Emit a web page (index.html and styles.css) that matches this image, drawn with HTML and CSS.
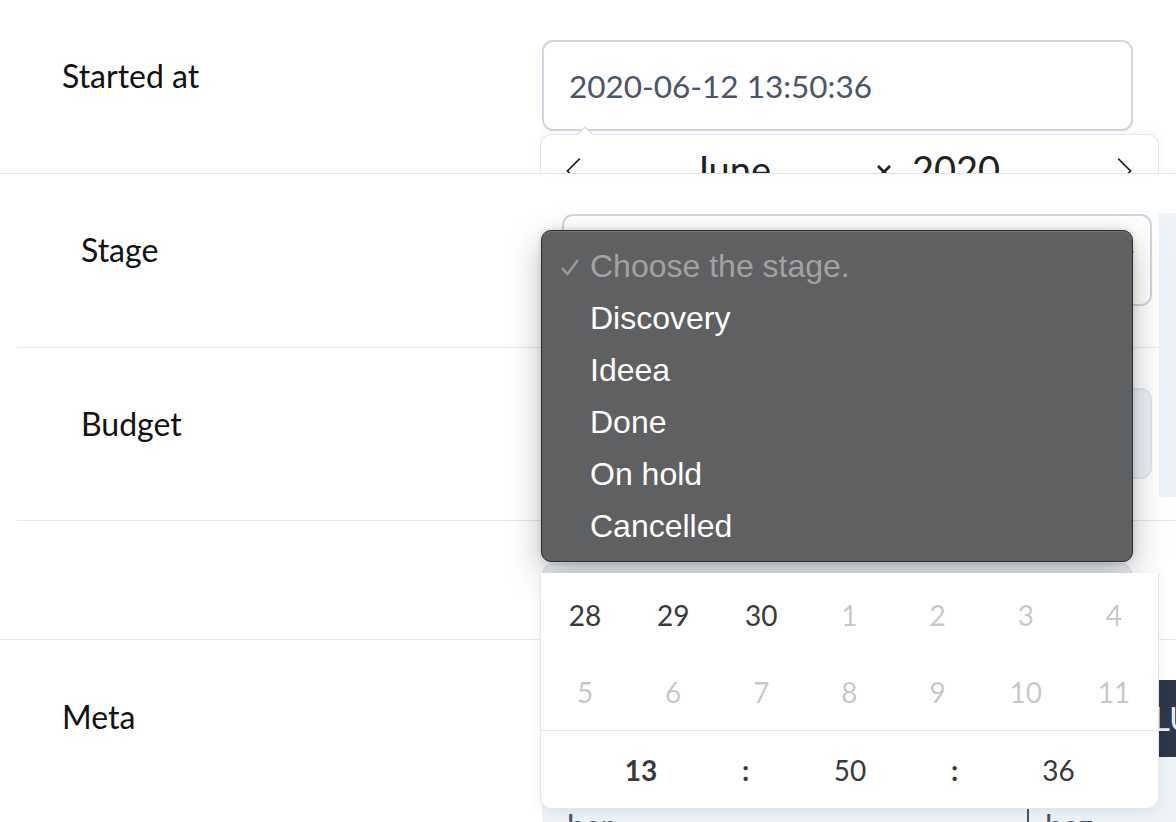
FILE: index.html
```html
<!DOCTYPE html>
<html lang="en">
<head>
<meta charset="utf-8">
<title>Form</title>
<link rel="stylesheet" href="styles.css">
</head>
<body>
<div class="form">
  <div class="row row-top">
    <div class="label">Started at</div>
    <div class="field">
      <div class="picker">
        <div class="input">2020-06-12 13:50:36</div>
        <div class="cal-head">
          <div class="cal-head-inner">
            <span class="nav prev"><svg viewBox="0 0 17 17" width="28" height="28"><path d="M5.207 8.471l7.146 7.147-0.707 0.707-7.853-7.854 7.854-7.853 0.707 0.707-7.147 7.146z"/></svg></span>
            <span class="month">June</span>
            <span class="month-arrow"><svg viewBox="0 0 16 14" width="16" height="14"><path d="M2 1 L14 13 M14 1 L2 13" stroke="#222" stroke-width="2.8" fill="none"/></svg></span>
            <span class="year">2020</span>
            <span class="nav next"><svg viewBox="0 0 17 17" width="28" height="28"><path d="M13.207 8.472l-7.854 7.854-0.707-0.707 7.146-7.146-7.146-7.148 0.707-0.707 7.854 7.854z"/></svg></span>
          </div>
        </div>
        <div class="cal-body">
          <div class="days">
            <span class="day">28</span><span class="day">29</span><span class="day">30</span><span class="day other">1</span><span class="day other">2</span><span class="day other">3</span><span class="day other">4</span>
            <span class="day other">5</span><span class="day other">6</span><span class="day other">7</span><span class="day other">8</span><span class="day other">9</span><span class="day other">10</span><span class="day other">11</span>
          </div>
          <div class="time">
            <span class="t hour">13</span><span class="sep">:</span><span class="t">50</span><span class="sep">:</span><span class="t">36</span>
          </div>
        </div>
      </div>
    </div>
  </div>

  <div class="nested">
    <div class="row row-stage">
      <div class="label">Stage</div>
      <div class="field">
        <div class="select-wrap">
          <div class="select">
            <svg class="chev" viewBox="0 0 18 10" width="18" height="10"><path d="M1 1 L9 9 L17 1" stroke="#2d3748" stroke-width="2.4" fill="none"/></svg>
          </div>
          <div class="dropdown">
            <div class="opt disabled"><svg class="check" viewBox="0 0 20 18" width="20" height="18"><path d="M2 10 L7.5 16 L18 2" stroke="#9c9c9c" stroke-width="2.2" fill="none"/></svg>Choose the stage.</div>
            <div class="opt">Discovery</div>
            <div class="opt">Ideea</div>
            <div class="opt">Done</div>
            <div class="opt">On hold</div>
            <div class="opt">Cancelled</div>
          </div>
        </div>
      </div>
    </div>
    <div class="row row-budget">
      <div class="label">Budget</div>
      <div class="field">
        <div class="input grey"></div>
      </div>
    </div>
    <div class="side-box"></div>
  </div>

  <div class="row row-empty">
    <div class="label"></div>
    <div class="field">
      <div class="input grey"></div>
    </div>
  </div>

  <div class="row row-meta">
    <div class="label">Meta</div>
    <div class="field">
      <div class="kv">
        <div class="kv-head"><span class="kv-cell">KEY</span><span class="kv-cell val-head">VALUE</span></div>
        <div class="kv-row"><span class="kv-cell">bar</span><span class="kv-cell val">baz</span></div>
      </div>
    </div>
  </div>
</div>
</body>
</html>
```

FILE: styles.css
```css
html, body {
  margin: 0;
  padding: 0;
}
body {
  width: 1176px;
  height: 822px;
  overflow: hidden;
  background: #ffffff;
  font-family: Lato, "Open Sans", sans-serif;
  color: #111111;
}

.row {
  display: grid;
  grid-template-columns: 542px 1fr;
  border-bottom: 1px solid #e2e8f0;
}
.label {
  font-size: 32px;
  line-height: 40px;
  padding-left: 62px;
  padding-top: 56px;
}
.field {
  padding-top: 40px;
}

.row-top { height: 173px; }

/* nested section */
.nested {
  margin-left: 17px;
  position: relative;
}
.nested .row {
  grid-template-columns: 545px 1fr;
}
.nested .label {
  padding-left: 64px;
}
.row-stage { height: 173px; }
.row-budget { height: 172px; }
.side-box {
  position: absolute;
  right: 0;
  top: 39px;
  width: 17px;
  height: 284px;
  background: #edf2f7;
}

.row-empty { height: 118px; }
.row-empty .field { padding-top: 42px; }
.row-meta { height: 200px; border-bottom: none; }
.row-meta .label { padding-top: 57px; }

/* inputs */
.picker {
  position: relative;
  width: 591px;
}
.input {
  box-sizing: border-box;
  width: 591px;
  height: 91px;
  border: 2px solid #cfd7e2;
  border-radius: 11px;
  padding-left: 25px;
  display: flex;
  align-items: center;
  font-size: 31.5px;
  color: #4a5568;
  background: #ffffff;
}
.input.grey {
  width: 590px;
  background: #edf2f7;
  border-color: #e2e8f0;
}

.select-wrap {
  position: relative;
  width: 590px;
}
.select {
  box-sizing: border-box;
  width: 590px;
  height: 92px;
  border: 2px solid #cfd7e2;
  border-radius: 11px;
  background: #ffffff;
  position: relative;
}
.chev {
  position: absolute;
  right: 16px;
  top: 34px;
}

/* calendar popup */
.cal-head {
  position: absolute;
  left: -1px;
  top: 95px;
  width: 617px;
  height: 38px;
  background: #ffffff;
  border-radius: 10px 10px 0 0;
  box-shadow: 1px 0 0 #e6e6e6, -1px 0 0 #e6e6e6, 0 -1px 0 #e6e6e6, 0 -3px 10px rgba(0, 0, 0, 0.05);
  z-index: 5;
}
.cal-head::before,
.cal-head::after {
  content: "";
  position: absolute;
  border: solid transparent;
  left: 36px;
}
.cal-head::before {
  top: -9px;
  border-width: 0 9px 9px 9px;
  border-bottom-color: #e2e2e2;
  margin-left: -1px;
}
.cal-head::after {
  top: -7px;
  border-width: 0 8px 8px 8px;
  border-bottom-color: #ffffff;
}
.cal-head-inner {
  height: 38px;
  overflow: hidden;
  display: flex;
  align-items: flex-start;
  padding: 0 20px 0 19px;
  font-size: 38px;
  line-height: 45px;
  color: #222222;
}
.nav {
  display: block;
  width: 28px;
  height: 28px;
  margin-top: 22px;
}
.nav svg {
  display: block;
  fill: #222222;
}
.month {
  margin-left: 105px;
  width: 183px;
  padding-top: 12px;
}
.month-arrow {
  width: 16px;
  margin-top: 30px;
}
.month-arrow svg { display: block; }
.year {
  margin-left: 20px;
  padding-top: 12px;
}
.next {
  margin-left: auto;
}

.cal-body {
  position: absolute;
  left: -1px;
  top: 533px;
  width: 617px;
  height: 235px;
  box-sizing: border-box;
  padding-top: 3px;
  background: #ffffff;
  border-radius: 0 0 11px 11px;
  box-shadow: 1px 0 0 #e6e6e6, -1px 0 0 #e6e6e6, 0 1px 0 #e6e6e6, 0 3px 13px rgba(0, 0, 0, 0.08);
  z-index: 5;
  font-size: 28px;
  color: #393939;
}
.days {
  display: grid;
  grid-template-columns: repeat(7, 1fr);
  grid-auto-rows: 77px;
}
.day {
  display: flex;
  align-items: center;
  justify-content: center;
}
.day.other {
  color: rgba(57, 57, 57, 0.28);
}
.time {
  border-top: 1px solid #e6e6e6;
  height: 77px;
  display: grid;
  grid-template-columns: 200px 9px 200px 9px 1fr;
  align-items: center;
  text-align: center;
}
.hour {
  font-weight: 700;
}
.sep {
  font-weight: 700;
}

/* native select menu */
.dropdown {
  position: absolute;
  left: -21px;
  top: 16px;
  width: 592px;
  height: 332px;
  box-sizing: border-box;
  padding-top: 9px;
  background: #5f6062;
  border: 1px solid #2c2c2c;
  border-radius: 10px;
  box-shadow: inset 0 1px 0 rgba(255, 255, 255, 0.14), 0 12px 34px rgba(0, 0, 0, 0.26), 0 0 6px rgba(0, 0, 0, 0.15);
  font-family: "Liberation Sans", Arial, sans-serif;
  font-size: 32px;
  color: #ffffff;
  z-index: 4;
}
.opt {
  position: relative;
  height: 52px;
  display: flex;
  align-items: center;
  padding-left: 48px;
}
.opt.disabled {
  color: #a2a2a2;
}
.check {
  position: absolute;
  left: 18px;
  top: 18px;
}

/* key/value table */
.kv {
  width: 720px;
}
.kv-head {
  height: 77px;
  background: #2d3748;
  color: #e8ecf2;
  display: grid;
  grid-template-columns: 485px 1fr;
  align-items: center;
  font-size: 32px;
}
.kv-head .kv-cell {
  padding-left: 25px;
}
.kv-head .val-head {
  padding-left: 85px;
}
.kv-row {
  background: #edf2f7;
  height: 100px;
  display: grid;
  grid-template-columns: 485px 1fr;
  font-size: 32px;
  line-height: 40px;
  color: #4a5568;
}
.kv-row .kv-cell {
  padding-top: 49px;
  padding-left: 25px;
}
.kv-row .val {
  border-left: 2px solid #4a5568;
  padding-left: 16px;
}
```
